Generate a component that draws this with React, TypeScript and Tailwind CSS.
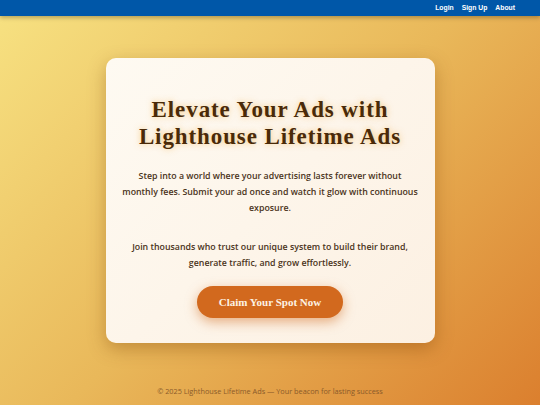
export default function App() {
    return (
        <div className="flex min-h-screen flex-col bg-[linear-gradient(135deg,#f7e282_0%,#e9b85a_50%,#db7f2e_100%)] font-['Open_Sans',sans-serif]">
            <header className="flex h-4 items-center justify-end gap-[8px] bg-[#0057a8] pr-[25px] shadow-[0_2px_4px_rgba(0,0,0,0.25)] font-['Liberation_Sans',sans-serif] text-[6.8px] font-bold text-white">
                <a>Login</a>
                <a>Sign Up</a>
                <a>About</a>
            </header>

            <main className="flex flex-1 justify-center pt-[42px]">
                <div className="flex h-[285px] w-[329px] flex-col items-center rounded-[10px] bg-[linear-gradient(135deg,#fefaf2,#fcf0e2)] px-[16px] pt-[38px] text-center shadow-[0_6px_18px_rgba(120,60,0,0.35)]">
                    <h1 className="font-['Liberation_Serif',serif] text-[23px] font-bold leading-[27px] tracking-[0.9px] text-[#4a2a08] [text-shadow:0_0_6px_rgba(240,180,80,0.7)]">
                        Elevate Your Ads with<br />Lighthouse Lifetime Ads
                    </h1>
                    <p className="mt-[18px] text-[8.8px] font-semibold leading-[16px] text-[#4a3320]">
                        Step into a world where your advertising lasts forever without monthly fees. Submit your ad once and watch it glow with continuous exposure.
                    </p>
                    <p className="mt-[23px] text-[8.8px] font-semibold leading-[16px] text-[#4a3320]">
                        Join thousands who trust our unique system to build their brand, generate traffic, and grow effortlessly.
                    </p>
                    <button className="mt-[15px] h-[32px] w-[146px] rounded-full bg-[#d2691e] font-['Liberation_Serif',serif] text-[11px] font-bold text-[#fdf2e4] shadow-[0_4px_12px_rgba(210,105,30,0.5)]">
                        Claim Your Spot Now
                    </button>
                </div>
            </main>

            <footer className="pb-[8px] text-center text-[7.3px] text-[#8a5a2a]">
                © 2025 Lighthouse Lifetime Ads — Your beacon for lasting success
            </footer>
        </div>
    )
}
